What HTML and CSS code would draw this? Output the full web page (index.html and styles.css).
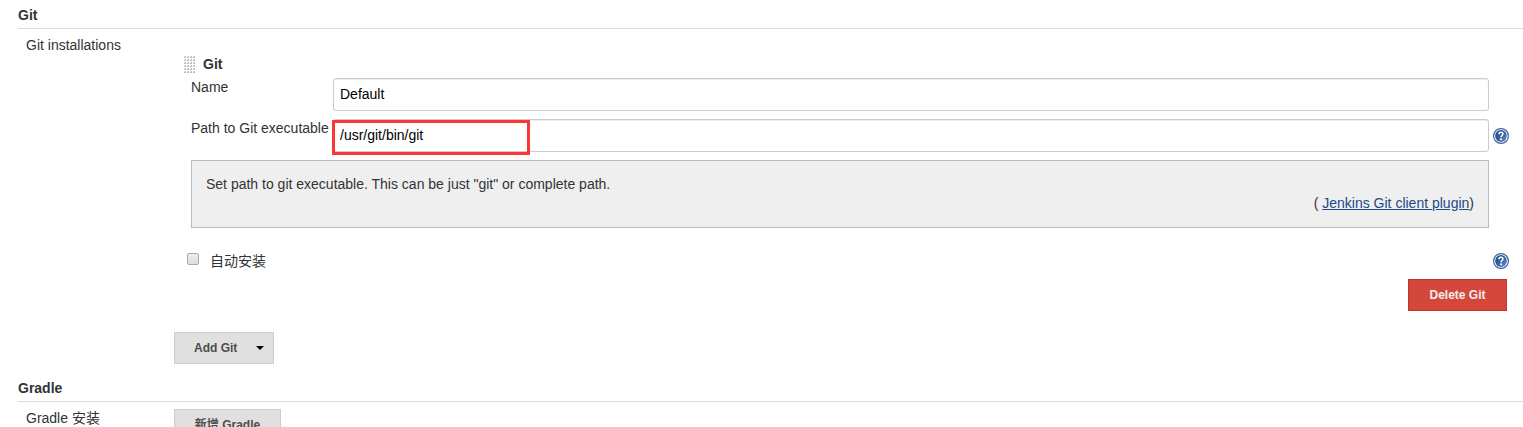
FILE: index.html
```html
<!DOCTYPE html>
<html lang="zh-CN">
<head>
<meta charset="utf-8">
<title>Git</title>
<link rel="stylesheet" href="styles.css">
</head>
<body>
<svg class="defs" width="0" height="0">
  <defs>
    <linearGradient id="ball" x1="0" y1="0" x2="1" y2="1"><stop offset="0" stop-color="#1d4583"/><stop offset=".5" stop-color="#345f9f"/><stop offset="1" stop-color="#7298cc"/></linearGradient>
    <symbol id="help" viewBox="0 0 16 16">
      <circle cx="8" cy="8" r="7.4" fill="#fff" stroke="#3c649d" stroke-width="1.2"/>
      <circle cx="8" cy="8" r="5.9" fill="url(#ball)"/>
      <path d="M6 6.3C6 3.6 10 3.7 9.9 6 9.8 7.5 8 7.6 8 9.3" fill="none" stroke="#fff" stroke-width="1.6"/>
      <circle cx="8" cy="11.3" r="1" fill="#fff"/>
    </symbol>
  </defs>
</svg>
<main class="page">
  <h2 class="section">Git</h2>
  <section class="row git">
    <div class="label">Git installations</div>
    <div class="content">
      <div class="heading"><svg class="grip" width="12" height="18" viewBox="0 0 12 18"><defs><pattern id="dots" width="3" height="3" patternUnits="userSpaceOnUse"><path d="M1 0h1v2H0V1h1z" fill="#bcbcbc"/><path d="M0 0h1v1H0z" fill="#e4e4e4"/></pattern></defs><rect width="12" height="18" fill="url(#dots)"/></svg><b>Git</b></div>
      <div class="field"><label>Name</label><div class="input">Default</div></div>
      <div class="field"><label>Path to Git executable</label><div class="input">/usr/git/bin/git<span class="highlight"></span></div><svg class="help"><use href="#help"/></svg></div>
      <div class="info"><div>Set path to git executable. This can be just "git" or complete path.</div><div class="source">( <a>Jenkins Git client plugin</a>)</div></div>
      <div class="auto"><span class="check"></span><span class="autolabel">自动安装</span><svg class="help"><use href="#help"/></svg></div>
      <div class="delete">Delete Git</div>
      <div class="button add">Add Git<svg class="arrow" width="8" height="4"><path d="M0 0h8L4 4z"/></svg></div>
    </div>
  </section>
  <h2 class="section">Gradle</h2>
  <section class="row"><div class="label">Gradle 安装</div><div class="button new">新增 Gradle</div></section>
</main>
</body>
</html>
```
FILE: styles.css
```css
* { box-sizing: border-box; }
body { margin: 0; background: #fff; color: #333; font: 14px/20px "Liberation Sans", "Noto Sans CJK SC", sans-serif; }
.defs { display: block; }
.page { height: 427px; overflow: hidden; padding-left: 18px; }
.section { margin: 0; height: 29px; padding-top: 5px; border-bottom: 1px solid #ddd; font-size: 14px; line-height: 20px; }
.row { display: flex; }
.git { height: 344px; }
.label { width: 156px; padding: 6px 0 0 8px; flex: none; }
.content { flex: 1; padding-top: 25px; }
.heading { display: flex; align-items: flex-start; height: 22px; padding-left: 10px; gap: 7px; }
.grip { margin-top: 2px; }
.field { display: flex; padding-left: 17px; height: 41px; }
.field label { width: 142px; flex: none; padding-top: 1px; white-space: nowrap; }
.input { position: relative; width: 1156px; height: 33px; margin-top: 2px; border: 1px solid #ccc; border-radius: 3px; padding: 5px 6px; color: #000; box-shadow: inset 0 1px 1px rgba(0,0,0,.075); }
.highlight { position: absolute; left: -2px; top: 0; width: 198px; height: 35px; border: 3px solid #fc3535; }
.help { width: 16px; height: 16px; }
.field .help { margin: 11px 0 0 4px; }
.info { margin: 2px 0 0 17px; width: 1298px; height: 68px; border: 1px solid #bbb; background: #efefef; padding: 13px 14px; line-height: 20px; }
.source { text-align: right; margin-top: -1px; }
.source a { color: #204a87; text-decoration: underline; }
.auto { display: flex; align-items: center; height: 24px; margin: 21px 14px 0 13px; }
.check { width: 12px; height: 12px; border: 1px solid #aaa; border-radius: 2px; background: linear-gradient(#eee, #ddd); margin-top: -4px; }
.autolabel { margin-left: 11px; flex: 1; }
.delete { width: 99px; height: 32px; margin: 6px 16px 0 auto; background: #d4483b; border: 1px solid #c03529; color: #f4eded; text-align: center; font: bold 12px/30px "Liberation Sans", sans-serif; }
.button { background: #e0e0e0; border: 1px solid #ccc; color: #4d4d4d; font-weight: bold; font-size: 12px; line-height: 30px; height: 32px; }
.add { display: flex; align-items: center; width: 100px; margin-top: 21px; padding-left: 19px; }
.arrow { margin-left: 19px; }
.new { width: 107px; margin-top: 7px; text-align: center; }
```
